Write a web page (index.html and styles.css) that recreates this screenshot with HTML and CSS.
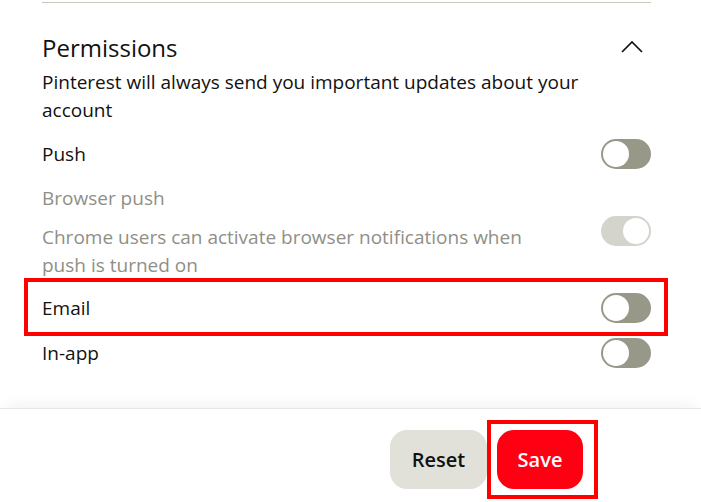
FILE: index.html
```html
<!DOCTYPE html>
<html>
<head>
<meta charset="utf-8">
<link rel="stylesheet" href="styles.css">
</head>
<body>
<div class="page">
  <main class="content">
    <div class="divider"></div>
    <div class="head">
      <h2 class="title">Permissions</h2>
      <svg class="chevron" width="22" height="12" viewBox="0 0 22 12"><polyline points="1,11 11,1 21,11" fill="none" stroke="#111" stroke-width="1.7"/></svg>
    </div>
    <p class="desc">Pinterest will always send you important updates about your account</p>

    <div class="row row-push">
      <span class="label">Push</span>
      <span class="toggle"><span class="knob"></span></span>
    </div>

    <div class="browser">
      <div class="label muted">Browser push</div>
      <div class="row row-top">
        <span class="label muted desc-text">Chrome users can activate browser notifications when push is turned on</span>
        <span class="toggle on disabled"><span class="knob"></span></span>
      </div>
    </div>

    <div class="row row-email highlight">
      <span class="label">Email</span>
      <span class="toggle"><span class="knob"></span></span>
    </div>

    <div class="row row-inapp">
      <span class="label">In-app</span>
      <span class="toggle"><span class="knob"></span></span>
    </div>
  </main>
  <footer class="footer">
    <button class="btn btn-reset">Reset</button>
    <button class="btn btn-save highlight-save">Save</button>
  </footer>
</div>
</body>
</html>
```
FILE: styles.css
```css
* { box-sizing: border-box; }
html, body { margin: 0; padding: 0; background: #fff; }
body {
  font-family: "Open Sans", "Noto Sans", sans-serif;
  color: #111;
  width: 701px;
  height: 502px;
  overflow: hidden;
}
.page {
  display: flex;
  flex-direction: column;
  height: 502px;
}
.content {
  flex: 1;
  padding: 2px 50px 0 42px;
}
.divider {
  height: 1px;
  background: #c9c7bb;
}
.head {
  display: flex;
  align-items: center;
  justify-content: space-between;
  margin-top: 29px;
  height: 32px;
}
.title {
  margin: 0;
  font-size: 24px;
  font-weight: 500;
  line-height: 32px;
}
.chevron { margin-right: 8px; margin-top: -2px; }
.desc {
  margin: 4px 0 0;
  font-size: 19px;
  line-height: 28px;
  width: 600px;
}
.row {
  display: flex;
  justify-content: space-between;
  align-items: center;
  height: 30px;
  position: relative;
}
.label { font-size: 19px; line-height: 24px; }
.muted { color: #8f8f86; }
.row-push { margin-top: 15px; }
.browser { margin-top: 17px; }
.row-top { height: auto; align-items: flex-start; margin-top: 6px; }
.desc-text { line-height: 28px; width: 500px; margin-top: 7px; }
.row-email { margin-top: 14px; }
.row-inapp { margin-top: 15px; }
.toggle {
  width: 50px;
  height: 30px;
  border-radius: 15px;
  background: #989889;
  position: relative;
  flex: none;
}
.knob {
  position: absolute;
  left: 2px;
  top: 2px;
  width: 26px;
  height: 26px;
  border-radius: 50%;
  background: #fff;
}
.toggle.on .knob { left: 22px; }
.toggle.disabled { background: #d4d4cc; }
.highlight::after {
  content: "";
  position: absolute;
  left: -18px;
  right: -17px;
  top: -15px;
  bottom: -13px;
  border: 4px solid #ff0000;
  pointer-events: none;
}
.footer {
  height: 94px;
  flex: none;
  display: flex;
  justify-content: flex-end;
  align-items: flex-start;
  gap: 10px;
  padding: 21px 118px 0 0;
  border-top: 1px solid #e6e6e6;
  box-shadow: 0 -10px 12px -6px rgba(0,0,0,0.05);
  position: relative;
}
.btn {
  border: none;
  height: 59px;
  border-radius: 17px;
  font-family: inherit;
  font-size: 20px;
  font-weight: 600;
  padding: 0;
  position: relative;
}
.btn-reset { width: 97px; background: #e1e1d9; color: #111; }
.btn-save { width: 86px; background: #ff0013; color: #fff; }
.highlight-save::after {
  content: "";
  position: absolute;
  left: -10px;
  right: -15px;
  top: -10px;
  bottom: -10px;
  border: 4px solid #ff0000;
  pointer-events: none;
}
```
